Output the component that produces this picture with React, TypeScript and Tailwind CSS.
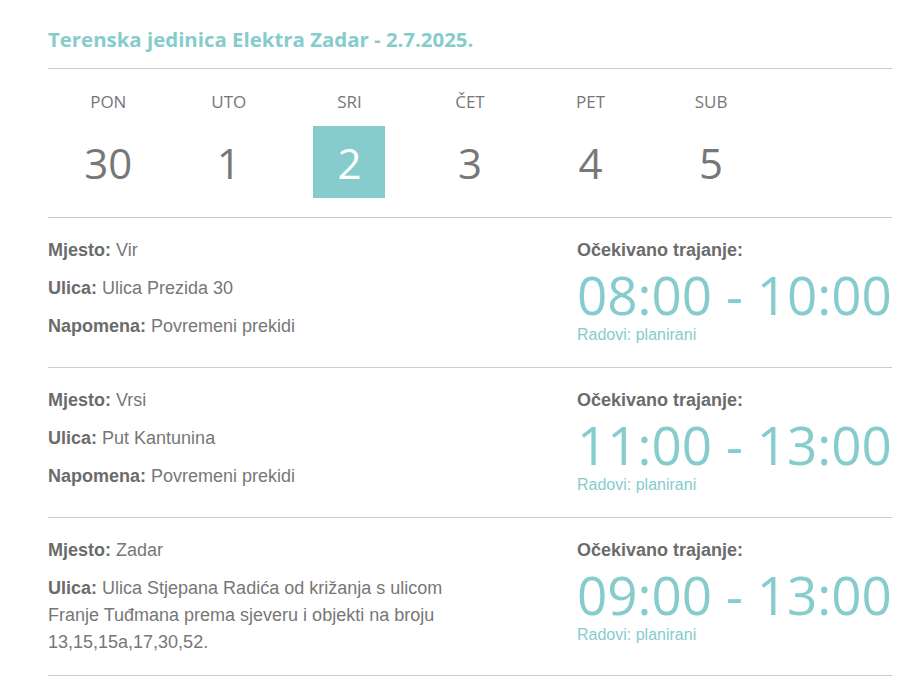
import React from 'react';

const days = [
  { label: 'PON', num: '30' },
  { label: 'UTO', num: '1' },
  { label: 'SRI', num: '2', active: true },
  { label: 'ČET', num: '3' },
  { label: 'PET', num: '4' },
  { label: 'SUB', num: '5' },
];

const outages = [
  { mjesto: 'Vir', ulica: 'Ulica Prezida 30', napomena: 'Povremeni prekidi', time: '08:00 - 10:00' },
  { mjesto: 'Vrsi', ulica: 'Put Kantunina', napomena: 'Povremeni prekidi', time: '11:00 - 13:00' },
  {
    mjesto: 'Zadar',
    ulica: 'Ulica Stjepana Radića od križanja s ulicom Franje Tuđmana prema sjeveru i objekti na broju 13,15,15a,17,30,52.',
    time: '09:00 - 13:00',
  },
];

const openSans = "font-['Open_Sans',sans-serif]";
const arial = "font-['Liberation_Sans',Arial,sans-serif]";

const App: React.FC = () => {
  return (
    <div className="min-h-screen bg-white">
      <div className="w-[844px] ml-[48px]">
        {/* Title */}
        <h1 className={`${openSans} pt-[25px] pb-[15px] text-[20.4px] leading-[28px] font-bold text-[#86cccc] border-b border-[#cccccc]`}>
          Terenska jedinica Elektra Zadar - 2.7.2025.
        </h1>

        {/* Days */}
        <div className={`${openSans} grid grid-cols-7 pt-[20px] pb-[19px] border-b border-[#cccccc]`}>
          {days.map((d) => (
            <div key={d.label} className="flex flex-col items-center">
              <div className="text-[17px] leading-[26px] text-[#777777]">{d.label}</div>
              <div
                className={`mt-[11px] w-[72px] h-[72px] flex items-center justify-center text-[42px] ${
                  d.active ? 'bg-[#86cccc] text-white' : 'text-[#777777]'
                }`}
              >
                {d.num}
              </div>
            </div>
          ))}
        </div>

        {/* Outages */}
        {outages.map((o, i) => (
          <div key={i} className="grid grid-cols-[529px_1fr] pt-[18px] pb-[11px] border-b border-[#cccccc]">
            <div className={`${arial} w-[410px] pt-[1px] text-[18px] leading-[27px] text-[#777777] [&>p]:mb-[11px] [&>p:last-child]:mb-[8px]`}>
              <p>
                <span className="font-bold text-[#6b6b6b]">Mjesto:</span> {o.mjesto}
              </p>
              <p>
                <span className="font-bold text-[#6b6b6b]">Ulica:</span> {o.ulica}
              </p>
              {o.napomena && (
                <p>
                  <span className="font-bold text-[#6b6b6b]">Napomena:</span> {o.napomena}
                </p>
              )}
            </div>
            <div className="pt-[1px] pb-[11px]">
              <div className={`${arial} text-[18px] leading-[27px] font-bold text-[#6b6b6b]`}>Očekivano trajanje:</div>
              <div className={`${openSans} mt-[3px] text-[53px] leading-[56px] text-[#86cccc] whitespace-nowrap`}>{o.time}</div>
              <div className={`${arial} mt-[2px] text-[16px] leading-[20px] text-[#86cccc]`}>Radovi: planirani</div>
            </div>
          </div>
        ))}
      </div>
    </div>
  );
};

export default App;
